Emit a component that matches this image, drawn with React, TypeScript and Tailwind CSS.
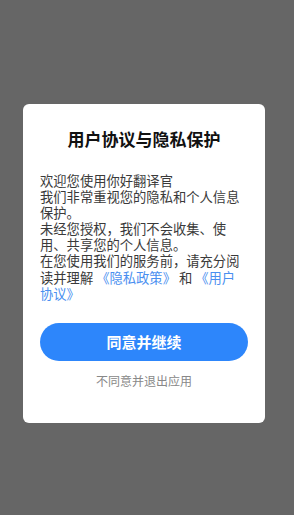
export default function App() {
  return (
    <div
      className="flex h-[515px] w-full bg-[#666666] pl-[23px] pt-[104px]"
      style={{ fontFamily: '"Noto Sans CJK SC", "Noto Sans", sans-serif' }}
    >
      <div className="flex h-[319px] w-[242px] flex-col rounded-[6px] bg-white px-[17px] pt-[23px]">
        <h1 className="text-center text-[17px] font-bold leading-[24px] text-[#111]">用户协议与隐私保护</h1>
        <div className="mt-[22px] w-[206px] text-[13.3px] leading-[16.1px] text-[#3a3a3a]">
          <p>欢迎您使用你好翻译官</p>
          <p>我们非常重视您的隐私和个人信息保护。</p>
          <p>未经您授权，我们不会收集、使用、共享您的个人信息。</p>
          <p>
            在您使用我们的服务前，请充分阅读并理解 <span className="text-[#4a8ff0]">《隐私政策》</span> 和{" "}
            <span className="text-[#4a8ff0]">《用户协议》</span>
          </p>
        </div>
        <button className="mt-[21px] h-[38px] w-full rounded-full bg-[#2d86fb] text-[15px] font-bold text-white">
          同意并继续
        </button>
        <p className="mt-[13px] text-center text-[12px] leading-[14px] text-[#888]">不同意并退出应用</p>
      </div>
    </div>
  );
}
